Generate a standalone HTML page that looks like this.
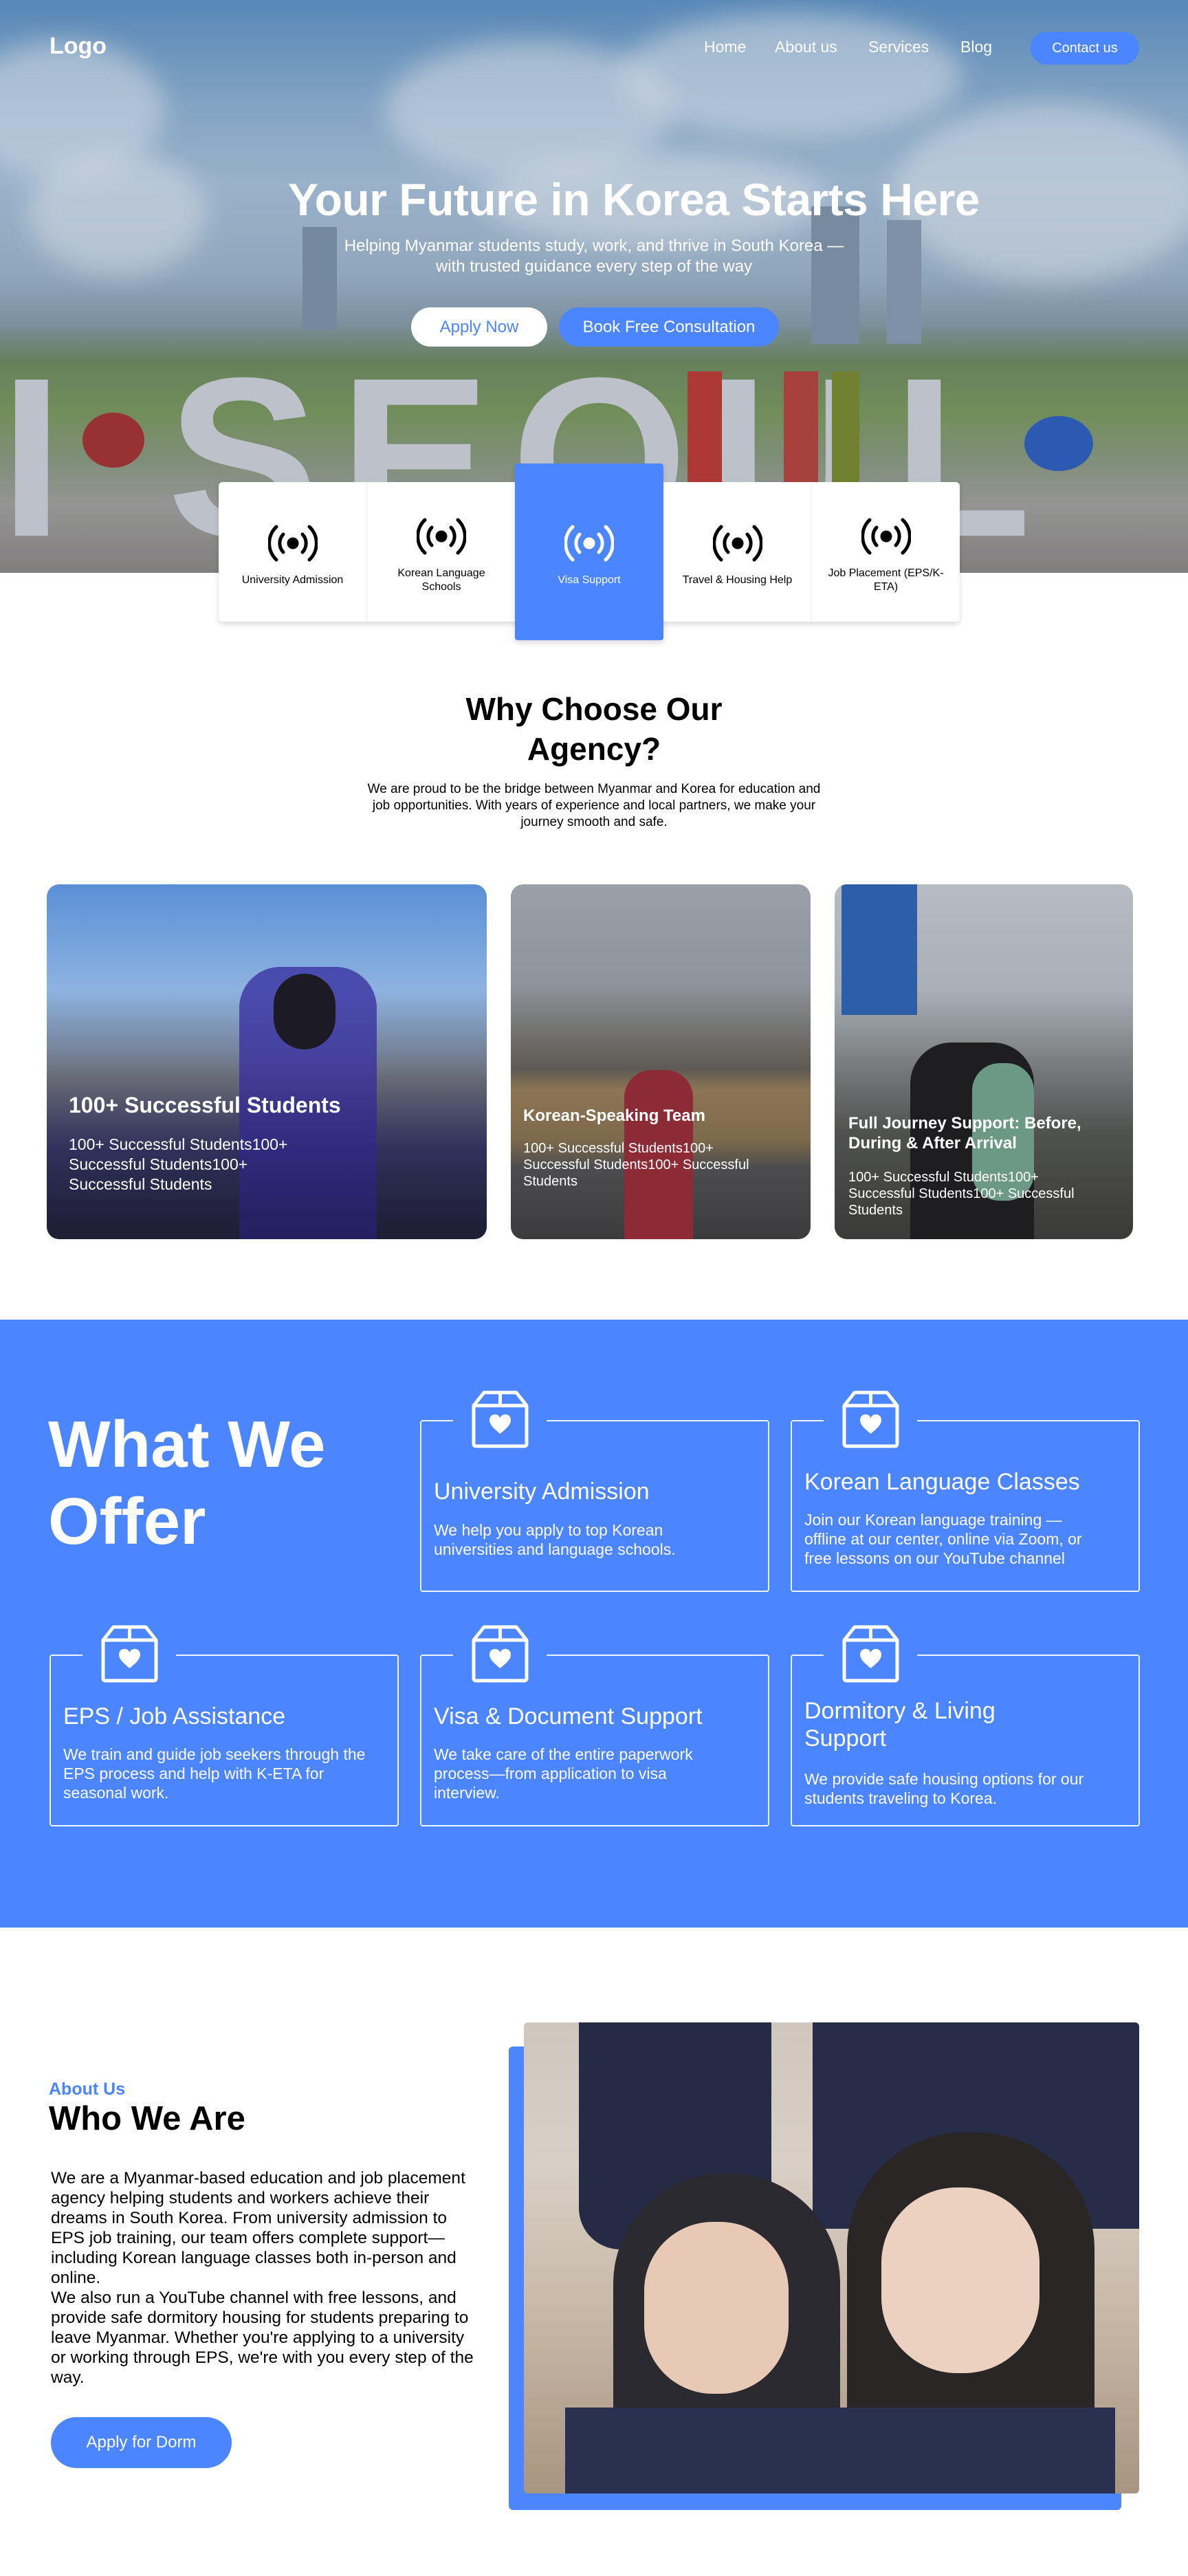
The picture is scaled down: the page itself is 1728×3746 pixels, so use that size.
<!DOCTYPE html>
<html><head><meta charset="utf-8">
<style>
*{margin:0;padding:0;box-sizing:border-box}
body{width:1728px;height:3746px;background:#fff;font-family:"Liberation Sans",Arial,sans-serif;position:relative;overflow:hidden;color:#000}
.abs{position:absolute}
.hero{left:0;top:0;width:1728px;height:833px;overflow:hidden;
background:linear-gradient(180deg,#5f93c4 0%,#8fb2d2 18%,#a9c3da 32%,#9fb6c9 48%,#8a9eab 56%,#6f8a5e 63%,#7c9a5a 72%,#8a9a7c 80%,#a3a29c 88%,#8e8884 100%)}
.cloud{position:absolute;border-radius:50%;background:rgba(235,240,245,.55);filter:blur(18px)}
.seoul{position:absolute;top:500px;left:0;font-size:330px;font-weight:700;color:#d2d5da;letter-spacing:30px;line-height:1}
.nav a{position:absolute;color:#fff;font-size:23px;top:55px}
.btn{position:absolute;border-radius:40px;text-align:center;font-size:24px}
.svc{position:absolute;top:701px;width:216px;height:203px;background:#fff;text-align:center;font-size:16px;line-height:20px}
.svc svg{display:block;margin:0 auto}
.card{position:absolute;top:1286px;height:516px;border-radius:18px;overflow:hidden;color:#fff}
.card .t{position:absolute;font-weight:700}
.card .d{position:absolute}
.blue{left:0;top:1919px;width:1728px;height:884px;background:#4b85ff}
.oc{position:absolute;width:508px;height:250px;border:2px solid rgba(255,255,255,.9);border-radius:4px;color:#fff}
.oc .gap{position:absolute;top:-4px;left:46px;width:136px;height:8px;background:#4b85ff}
.oc svg{position:absolute;top:-45px;left:73px}
.oc h3{position:absolute;left:18px;font-size:34px;font-weight:400;line-height:40px}
.oc p{position:absolute;left:18px;width:415px;font-size:23px;line-height:28px}
</style></head><body>

<div class="abs hero">
  <div class="cloud" style="left:-60px;top:60px;width:300px;height:200px"></div>
  <div class="cloud" style="left:40px;top:220px;width:260px;height:180px"></div>
  <div class="cloud" style="left:560px;top:60px;width:420px;height:200px"></div>
  <div class="cloud" style="left:900px;top:20px;width:500px;height:180px"></div>
  <div class="cloud" style="left:1300px;top:150px;width:450px;height:260px"></div>
  <div class="cloud" style="left:700px;top:220px;width:500px;height:140px"></div>
  <div class="abs" style="left:440px;top:330px;width:50px;height:150px;background:#8094a8"></div>
  <div class="abs" style="left:1180px;top:300px;width:70px;height:200px;background:#8396aa"></div>
  <div class="abs" style="left:1290px;top:320px;width:50px;height:180px;background:#8a9cb0"></div>
  <div class="seoul">I SEOUL U</div>
  <div class="abs" style="left:120px;top:600px;width:90px;height:80px;border-radius:50%;background:#a8302f"></div>
  <div class="abs" style="left:1490px;top:605px;width:100px;height:80px;border-radius:50%;background:#2d5fbf"></div>
  <div class="abs" style="left:1000px;top:540px;width:50px;height:250px;background:#c03a33"></div>
  <div class="abs" style="left:1140px;top:540px;width:50px;height:250px;background:#b8433a"></div>
  <div class="abs" style="left:1210px;top:540px;width:40px;height:250px;background:#7d8a2d"></div>
  <div class="abs" style="left:0;top:0;width:1728px;height:833px;background:rgba(40,60,90,.12)"></div>
</div>

<div class="abs" style="left:72px;top:48px;color:#fff;font-size:34px;font-weight:700">Logo</div>
<div class="nav">
  <a style="left:1024px">Home</a>
  <a style="left:1127px">About us</a>
  <a style="left:1263px">Services</a>
  <a style="left:1397px">Blog</a>
</div>
<div class="btn" style="left:1499px;top:46px;width:158px;height:48px;background:#4b85ff;color:#fff;font-size:20px;line-height:48px">Contact us</div>

<div class="abs" style="left:58px;top:252px;width:1728px;text-align:center;color:#fff;font-size:66px;font-weight:700;letter-spacing:-0.5px">Your Future in Korea Starts Here</div>
<div class="abs" style="left:0;top:343px;width:1728px;text-align:center;color:#fff;font-size:24px;line-height:30px">Helping Myanmar students study, work, and thrive in South Korea —<br>with trusted guidance every step of the way</div>
<div class="btn" style="left:598px;top:447px;width:198px;height:57px;background:#fff;color:#4b85ff;line-height:57px">Apply Now</div>
<div class="btn" style="left:813px;top:447px;width:320px;height:57px;background:#4b85ff;color:#fff;line-height:57px">Book Free Consultation</div>

<div class="abs" style="left:318px;top:701px;width:1078px;height:203px;background:#fff;border-radius:6px;box-shadow:0 4px 8px rgba(0,0,0,.15)"></div>
<svg width="0" height="0" style="position:absolute"><defs><g id="bc"><circle cx="36" cy="28" r="8"/><path d="M22 15a19 19 0 0 0 0 26M50 15a19 19 0 0 1 0 26M12 4a33 33 0 0 0 0 48M60 4a33 33 0 0 1 0 48" fill="none" stroke-width="5" stroke-linecap="round"/></g></defs></svg>
<div class="svc" style="left:318px;border-right:1px solid #eee;border-radius:6px 0 0 6px"><svg width="72" height="56" style="margin-top:61px" fill="#000" stroke="#000"><use href="#bc"/></svg><div style="margin-top:16px">University Admission</div></div>
<div class="svc" style="left:534px"><svg width="72" height="56" style="margin-top:51px" fill="#000" stroke="#000"><use href="#bc"/></svg><div style="margin-top:16px">Korean Language<br>Schools</div></div>
<div class="svc" style="left:749px;top:674px;height:257px;background:#4b85ff;color:#fff;border-radius:4px;box-shadow:0 4px 8px rgba(0,0,0,.15)"><svg width="72" height="56" style="margin-top:88px" fill="#fff" stroke="#fff"><use href="#bc"/></svg><div style="margin-top:16px">Visa Support</div></div>
<div class="svc" style="left:965px;border-right:1px solid #eee"><svg width="72" height="56" style="margin-top:61px" fill="#000" stroke="#000"><use href="#bc"/></svg><div style="margin-top:16px">Travel &amp; Housing Help</div></div>
<div class="svc" style="left:1181px;width:215px;border-radius:0 6px 6px 0"><svg width="72" height="56" style="margin-top:51px" fill="#000" stroke="#000"><use href="#bc"/></svg><div style="margin-top:16px">Job Placement (EPS/K-<br>ETA)</div></div>

<div class="abs" style="left:0;top:1002px;width:1728px;text-align:center;font-size:46px;font-weight:700;line-height:58px">Why Choose Our<br>Agency?</div>
<div class="abs" style="left:0;top:1136px;width:1728px;text-align:center;font-size:19px;line-height:24px">We are proud to be the bridge between Myanmar and Korea for education and<br>job opportunities. With years of experience and local partners, we make your<br>journey smooth and safe.</div>

<div class="card" style="left:68px;width:640px;background:linear-gradient(180deg,#5a8fd6 0%,#8db3e0 30%,#6a6d78 55%,#3b3a6e 75%,#2c2d4e 100%)">
  <div class="abs" style="left:280px;top:120px;width:200px;height:396px;background:#3a32a0;opacity:.8;border-radius:60px 60px 0 0"></div>
  <div class="abs" style="left:330px;top:130px;width:90px;height:110px;background:#1c1a22;border-radius:45px"></div>
  <div class="abs" style="left:0;top:0;width:640px;height:516px;background:linear-gradient(180deg,rgba(0,0,0,0) 50%,rgba(0,0,0,.35))"></div>
  <div class="t" style="left:32px;top:303px;font-size:32px">100+ Successful Students</div>
  <div class="d" style="left:32px;top:364px;font-size:23px;line-height:29px;width:330px">100+ Successful Students100+ Successful Students100+ Successful Students</div>
</div>
<div class="card" style="left:743px;width:436px;background:linear-gradient(180deg,#9aa0a6 0%,#8e949a 28%,#6d6a66 45%,#5e5a55 52%,#8c7554 58%,#7d6a4c 72%,#4c4c4e 80%,#3c3c3e 100%)">
  <div class="abs" style="left:165px;top:270px;width:100px;height:246px;background:#8c2a35;border-radius:40px 40px 0 0"></div>
  <div class="t" style="left:18px;top:323px;font-size:24px">Korean-Speaking Team</div>
  <div class="d" style="left:18px;top:372px;font-size:20px;line-height:24px;width:340px">100+ Successful Students100+ Successful Students100+ Successful Students</div>
</div>
<div class="card" style="left:1214px;width:434px;background:linear-gradient(180deg,#b7bcc4 0%,#a9afb6 30%,#7a7e80 50%,#505250 70%,#3a3a38 100%)">
  <div class="abs" style="left:10px;top:0;width:110px;height:190px;background:#2d5fa8"></div>
  <div class="abs" style="left:110px;top:230px;width:180px;height:286px;background:#1e1e20;border-radius:60px 60px 0 0"></div>
  <div class="abs" style="left:200px;top:260px;width:90px;height:200px;background:#7fb7a0;opacity:.8;border-radius:40px"></div>
  <div class="t" style="left:20px;top:333px;font-size:24px;line-height:29px;width:400px">Full Journey Support: Before, During &amp; After Arrival</div>
  <div class="d" style="left:20px;top:414px;font-size:20px;line-height:24px;width:340px">100+ Successful Students100+ Successful Students100+ Successful Students</div>
</div>

<div class="abs blue"></div>
<div class="abs" style="left:70px;top:2045px;color:#fff;font-size:96px;font-weight:700;line-height:112px">What We<br>Offer</div>

<svg width="0" height="0" style="position:absolute"><defs><g id="bx"><path d="M18 3H65L80 22V78a3 3 0 0 1-3 3H6a3 3 0 0 1-3-3V22Z M3 22H80 M41.5 3V22" fill="none" stroke="#fff" stroke-width="5" stroke-linejoin="round"/><path d="M41.5 63C32 55 26 50 26 43a8 8 0 0 1 15.5-3a8 8 0 0 1 15.5 3c0 7-6 12-15.5 20Z" fill="#fff"/></g></defs></svg>

<div class="oc" style="left:611px;top:2065px"><div class="gap"></div><svg width="83" height="84"><use href="#bx"/></svg><h3 style="top:82px">University Admission</h3><p style="top:144px;width:390px">We help you apply to top Korean universities and language schools.</p></div>
<div class="oc" style="left:1150px;top:2065px"><div class="gap"></div><svg width="83" height="84"><use href="#bx"/></svg><h3 style="top:68px">Korean Language Classes</h3><p style="top:129px;width:440px">Join our Korean language training — offline at our center, online via Zoom, or free lessons on our YouTube channel</p></div>
<div class="oc" style="left:72px;top:2406px"><div class="gap"></div><svg width="83" height="84"><use href="#bx"/></svg><h3 style="top:68px">EPS / Job Assistance</h3><p style="top:129px;width:450px">We train and guide job seekers through the EPS process and help with K-ETA for seasonal work.</p></div>
<div class="oc" style="left:611px;top:2406px"><div class="gap"></div><svg width="83" height="84"><use href="#bx"/></svg><h3 style="top:68px">Visa &amp; Document Support</h3><p style="top:129px;width:420px">We take care of the entire paperwork process—from application to visa interview.</p></div>
<div class="oc" style="left:1150px;top:2406px"><div class="gap"></div><svg width="83" height="84"><use href="#bx"/></svg><h3 style="top:60px">Dormitory &amp; Living<br>Support</h3><p style="top:165px;width:450px">We provide safe housing options for our students traveling to Korea.</p></div>

<div class="abs" style="left:71px;top:3024px;color:#4b85ff;font-size:25px;font-weight:700">About Us</div>
<div class="abs" style="left:71px;top:3053px;font-size:49px;font-weight:700">Who We Are</div>
<div class="abs" style="left:74px;top:3153px;width:620px;font-size:24.5px;line-height:29px">We are a Myanmar-based education and job placement agency helping students and workers achieve their dreams in South Korea. From university admission to EPS job training, our team offers complete support—including Korean language classes both in-person and online.<br>We also run a YouTube channel with free lessons, and provide safe dormitory housing for students preparing to leave Myanmar. Whether you're applying to a university or working through EPS, we're with you every step of the way.</div>
<div class="btn" style="left:74px;top:3515px;width:263px;height:74px;background:#4b85ff;color:#fff;line-height:74px">Apply for Dorm</div>

<div class="abs" style="left:740px;top:2976px;width:891px;height:674px;background:#4b85ff;border-radius:6px"></div>
<div class="abs" style="left:762px;top:2941px;width:895px;height:685px;border-radius:6px;overflow:hidden;background:linear-gradient(180deg,#cfc6bd 0%,#d8cfc6 30%,#c9b9a8 60%,#a89580 100%)">
  <div class="abs" style="left:80px;top:0;width:280px;height:330px;background:#252b45;border-radius:0 0 60px 60px"></div>
  <div class="abs" style="left:420px;top:0;width:475px;height:300px;background:#272d48"></div>
  <div class="abs" style="left:130px;top:220px;width:330px;height:465px;background:#2a2a30;border-radius:160px 160px 0 0"></div>
  <div class="abs" style="left:175px;top:290px;width:210px;height:250px;background:#e8c9b5;border-radius:100px"></div>
  <div class="abs" style="left:470px;top:160px;width:360px;height:525px;background:#2a2626;border-radius:170px 170px 0 0"></div>
  <div class="abs" style="left:520px;top:240px;width:230px;height:270px;background:#ecd1c0;border-radius:110px"></div>
  <div class="abs" style="left:60px;top:560px;width:800px;height:125px;background:#2a3050"></div>
</div>
</body></html>
